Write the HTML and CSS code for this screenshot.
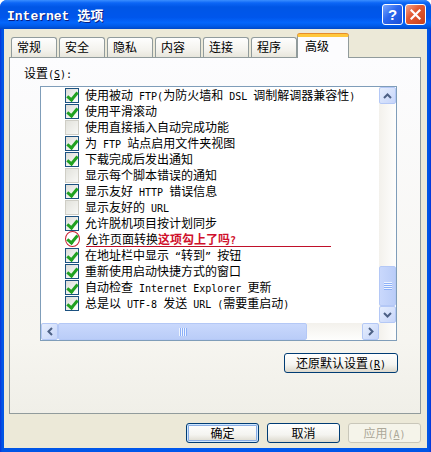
FILE: index.html
```html
<!DOCTYPE html>
<html lang="zh-CN">
<head>
    <meta charset="UTF-8">
    <meta name="viewport" content="width=device-width, initial-scale=1.0">
    <title>Internet 选项</title>
    <link rel="stylesheet" href="styles.css">
</head>
<body>
    <div class="window">
        <div class="titlebar">
            <span class="title">Internet 选项</span>
            <div class="title-buttons">
                <span class="tbtn help">?</span>
                <span class="tbtn close">
                    <svg width="11" height="11" viewBox="0 0 11 11"><path d="M1.5 1.5 L9.5 9.5 M9.5 1.5 L1.5 9.5" stroke="#fff" stroke-width="2.2" stroke-linecap="square"/></svg>
                </span>
            </div>
        </div>
        <div class="client">
            <div class="tabs">
                <span class="tab">常规</span>
                <span class="tab">安全</span>
                <span class="tab">隐私</span>
                <span class="tab">内容</span>
                <span class="tab">连接</span>
                <span class="tab">程序</span>
                <span class="tab active">高级</span>
            </div>
            <div class="panel">
                <p class="caption">设置<span class="en">(<u>S</u>):</span></p>
                <div class="listbox">
                    <div class="items">
                        <div class="row"><span class="check on"></span><span class="label">使用被动<span class="en"> FTP(</span>为防火墙和<span class="en"> DSL </span>调制解调器兼容性<span class="en">)</span></span></div>
                        <div class="row"><span class="check on"></span><span class="label">使用平滑滚动</span></div>
                        <div class="row"><span class="check"></span><span class="label">使用直接插入自动完成功能</span></div>
                        <div class="row"><span class="check on"></span><span class="label">为<span class="en"> FTP </span>站点启用文件夹视图</span></div>
                        <div class="row"><span class="check on"></span><span class="label">下载完成后发出通知</span></div>
                        <div class="row"><span class="check"></span><span class="label">显示每个脚本错误的通知</span></div>
                        <div class="row"><span class="check on"></span><span class="label">显示友好<span class="en"> HTTP </span>错误信息</span></div>
                        <div class="row"><span class="check"></span><span class="label">显示友好的<span class="en"> URL</span></span></div>
                        <div class="row"><span class="check on"></span><span class="label">允许脱机项目按计划同步</span></div>
                        <div class="row"><span class="check on circled"></span><span class="label marked">允许页面转换<b class="note">这项勾上了吗<span class="en">?</span></b></span></div>
                        <div class="row"><span class="check on"></span><span class="label">在地址栏中显示<span class="en"> “</span>转到<span class="en">” </span>按钮</span></div>
                        <div class="row"><span class="check on"></span><span class="label">重新使用启动快捷方式的窗口</span></div>
                        <div class="row"><span class="check on"></span><span class="label">自动检查<span class="en"> Internet Explorer </span>更新</span></div>
                        <div class="row"><span class="check on"></span><span class="label">总是以<span class="en"> UTF-8 </span>发送<span class="en"> URL (</span>需要重启动<span class="en">)</span></span></div>
                    </div>
                    <div class="vscroll">
                        <span class="sbtn">
                            <svg width="9" height="6" viewBox="0 0 9 6"><path d="M1 5 L4.5 1.5 L8 5" fill="none" stroke="#4d6185" stroke-width="2"/></svg>
                        </span>
                        <span class="track"></span>
                        <span class="thumb"><span class="grip"></span></span>
                        <span class="sbtn">
                            <svg width="9" height="6" viewBox="0 0 9 6"><path d="M1 1 L4.5 4.5 L8 1" fill="none" stroke="#4d6185" stroke-width="2"/></svg>
                        </span>
                    </div>
                    <div class="hscroll">
                        <span class="sbtn">
                            <svg width="6" height="9" viewBox="0 0 6 9"><path d="M5 1 L1.5 4.5 L5 8" fill="none" stroke="#4d6185" stroke-width="2"/></svg>
                        </span>
                        <span class="thumb"><span class="grip"></span></span>
                        <span class="track"></span>
                        <span class="sbtn">
                            <svg width="6" height="9" viewBox="0 0 6 9"><path d="M1 1 L4.5 4.5 L1 8" fill="none" stroke="#4d6185" stroke-width="2"/></svg>
                        </span>
                    </div>
                    <div class="corner"></div>
                </div>
                <button class="btn restore">还原默认设置<span class="en">(<u>R</u>)</span></button>
            </div>
            <div class="footer">
                <button class="btn default">确定</button>
                <button class="btn">取消</button>
                <button class="btn" disabled>应用<span class="en">(<u>A</u>)</span></button>
            </div>
        </div>
    </div>
</body>
</html>
```

FILE: styles.css
```css
* {
    box-sizing: border-box;
}
body {
    margin: 0;
    font-family: "Noto Sans CJK SC", sans-serif;
    font-size: 12px;
    color: #000;
    background: #fff;
}
.en {
    font-family: "DejaVu Sans Mono", monospace;
    font-size: 10px;
    line-height: 1;
}
u {
    text-decoration: underline;
}

/* 窗口框架 */
.window {
    width: 431px;
    height: 452px;
    display: flex;
    flex-direction: column;
    background: linear-gradient(90deg, #0831d9 0, #0055e5 2px, #0058ee 50%, #0055e5 calc(100% - 2px), #0831d9 100%);
    border-radius: 7px 7px 0 0;
    overflow: hidden;
}
.titlebar {
    height: 29px;
    flex: none;
    display: flex;
    align-items: center;
    justify-content: space-between;
    padding: 0 5px 0 7px;
    background: linear-gradient(#3a8eff 0%, #0c66f6 10%, #0056e6 24%, #0056ec 60%, #0466fc 78%, #005ae8 90%, #0048c8 100%);
}
.title {
    color: #fff;
    font-family: "Liberation Mono", "Noto Sans CJK SC", monospace;
    font-weight: bold;
    font-size: 13px;
    text-shadow: 1px 1px #0a1e80;
}
.title-buttons {
    display: flex;
    gap: 2px;
}
.tbtn {
    width: 21px;
    height: 21px;
    border: 1px solid #fff;
    border-radius: 3px;
    display: flex;
    align-items: center;
    justify-content: center;
    color: #fff;
}
.help {
    background: linear-gradient(135deg, #7aa8ff, #2c67ee 45%, #1a4fd8);
    font: bold 15px "Liberation Sans", sans-serif;
}
.close {
    background: linear-gradient(135deg, #f4a58c, #e35a34 40%, #c8401a);
}

/* 客户区 */
.client {
    flex: 1;
    margin: 0 4px 4px;
    background: #ece9d8;
    display: flex;
    flex-direction: column;
}
.tabs {
    height: 28px;
    display: flex;
    align-items: flex-end;
    padding: 5px 0 0 7px;
}
.tab {
    width: 46px;
    height: 20px;
    margin-right: 2px;
    padding-left: 5px;
    line-height: 18px;
    border: 1px solid #919b9c;
    border-bottom: none;
    border-radius: 3px 3px 0 0;
    background: linear-gradient(#fefefe, #f4f3ee 60%, #e8e6dc);
}
.tab.active {
    width: 52px;
    height: 24px;
    margin: 0 0 -1px -2px;
    padding-left: 7px;
    line-height: 17px;
    border-top: 3px solid #ffc83c;
    box-shadow: 0 -1px 0 #e68b2c;
    background: #fcfcfe;
    position: relative;
    z-index: 1;
}
.panel {
    width: 412px;
    height: 357px;
    margin-left: 5px;
    border: 1px solid #919b9c;
    background: linear-gradient(#fcfcfe, #f6f5f0 80%, #f0efe8);
    display: flex;
    flex-direction: column;
}
.caption {
    margin: 7px 0 0 14px;
    height: 16px;
    line-height: 16px;
}

/* 列表框 */
.listbox {
    width: 357px;
    height: 255px;
    margin: 5px 0 0 30px;
    border: 1px solid #7f9db9;
    background: #fff;
    display: grid;
    grid-template-columns: 1fr 17px;
    grid-template-rows: 1fr 17px;
    overflow: hidden;
}
.items {
    overflow: hidden;
}
.row {
    height: 16px;
    display: flex;
    align-items: flex-start;
    padding-left: 24px;
    white-space: nowrap;
}
.check {
    width: 14px;
    height: 15px;
    margin-top: 1px;
    flex: none;
    border: 1px solid #cfcec6;
    background: linear-gradient(135deg, #e2e2dc, #f8f8f5);
    position: relative;
}
.check.on {
    border-color: #1c5180;
    background: linear-gradient(135deg, #dcdcd7, #ffffff);
}
.check.on::after {
    content: "";
    position: absolute;
    left: 3px;
    top: 1px;
    width: 4px;
    height: 8px;
    border: solid #21a121;
    border-width: 0 3px 3px 0;
    transform: rotate(40deg);
}
.check.circled {
    width: 15px;
    height: 16px;
    margin-top: 0;
    border-color: #c81e32;
    border-radius: 50%;
    background: #fff;
}
.label {
    margin-left: 6px;
    height: 16px;
    line-height: 16px;
}
.label.marked {
    width: 245px;
    line-height: 15px;
    border-bottom: 1px solid #c0102a;
}
.note {
    color: #d0102c;
    font-weight: bold;
}

/* 滚动条 */
.vscroll,
.corner {
    background: linear-gradient(90deg, #f3f1ec, #fefefd);
}
.vscroll {
    display: flex;
    flex-direction: column;
}
.hscroll {
    display: flex;
    background: linear-gradient(#f3f1ec, #fefefd);
}
.track {
    flex: 1;
}
.sbtn {
    width: 17px;
    height: 17px;
    flex: none;
    display: flex;
    align-items: center;
    justify-content: center;
    border: 1px solid #b4c8f6;
    border-radius: 2px;
    background: linear-gradient(135deg, #e6eefd, #c6d5fa);
}
.thumb {
    display: flex;
    align-items: center;
    justify-content: center;
    border: 1px solid #b4c8f6;
    border-radius: 2px;
}
.vscroll .thumb {
    height: 40px;
    background: linear-gradient(90deg, #c9d8fc, #bacdf8);
}
.hscroll .thumb {
    width: 249px;
    background: linear-gradient(#c9d8fc, #bacdf8);
}
.grip {
    width: 8px;
    height: 8px;
}
.vscroll .grip {
    background: repeating-linear-gradient(#eef4fe 0 1px, #8cb0f8 1px 2px);
}
.hscroll .grip {
    background: repeating-linear-gradient(90deg, #eef4fe 0 1px, #8cb0f8 1px 2px);
}

/* 按钮 */
.btn {
    height: 20px;
    padding: 0;
    font-family: "Noto Sans CJK SC", sans-serif;
    font-size: 12px;
    line-height: 18px;
    color: #000;
    border: 1px solid #003c74;
    border-radius: 3px;
    background: linear-gradient(#ffffff, #f4f4f0 60%, #dcd8cc);
}
.restore {
    width: 114px;
    align-self: flex-end;
    margin: 12px 22px 0 0;
}
.footer {
    display: flex;
    justify-content: flex-end;
    gap: 8px;
    margin: 9px 6px 0 0;
}
.footer .btn {
    width: 73px;
}
.btn.default {
    box-shadow: inset 0 0 0 1px #cee7ff, inset 0 0 0 2px #89ade4;
}
.btn:disabled {
    color: #aca899;
    border-color: #c9c7ba;
    background: #f5f4ea;
}
```
